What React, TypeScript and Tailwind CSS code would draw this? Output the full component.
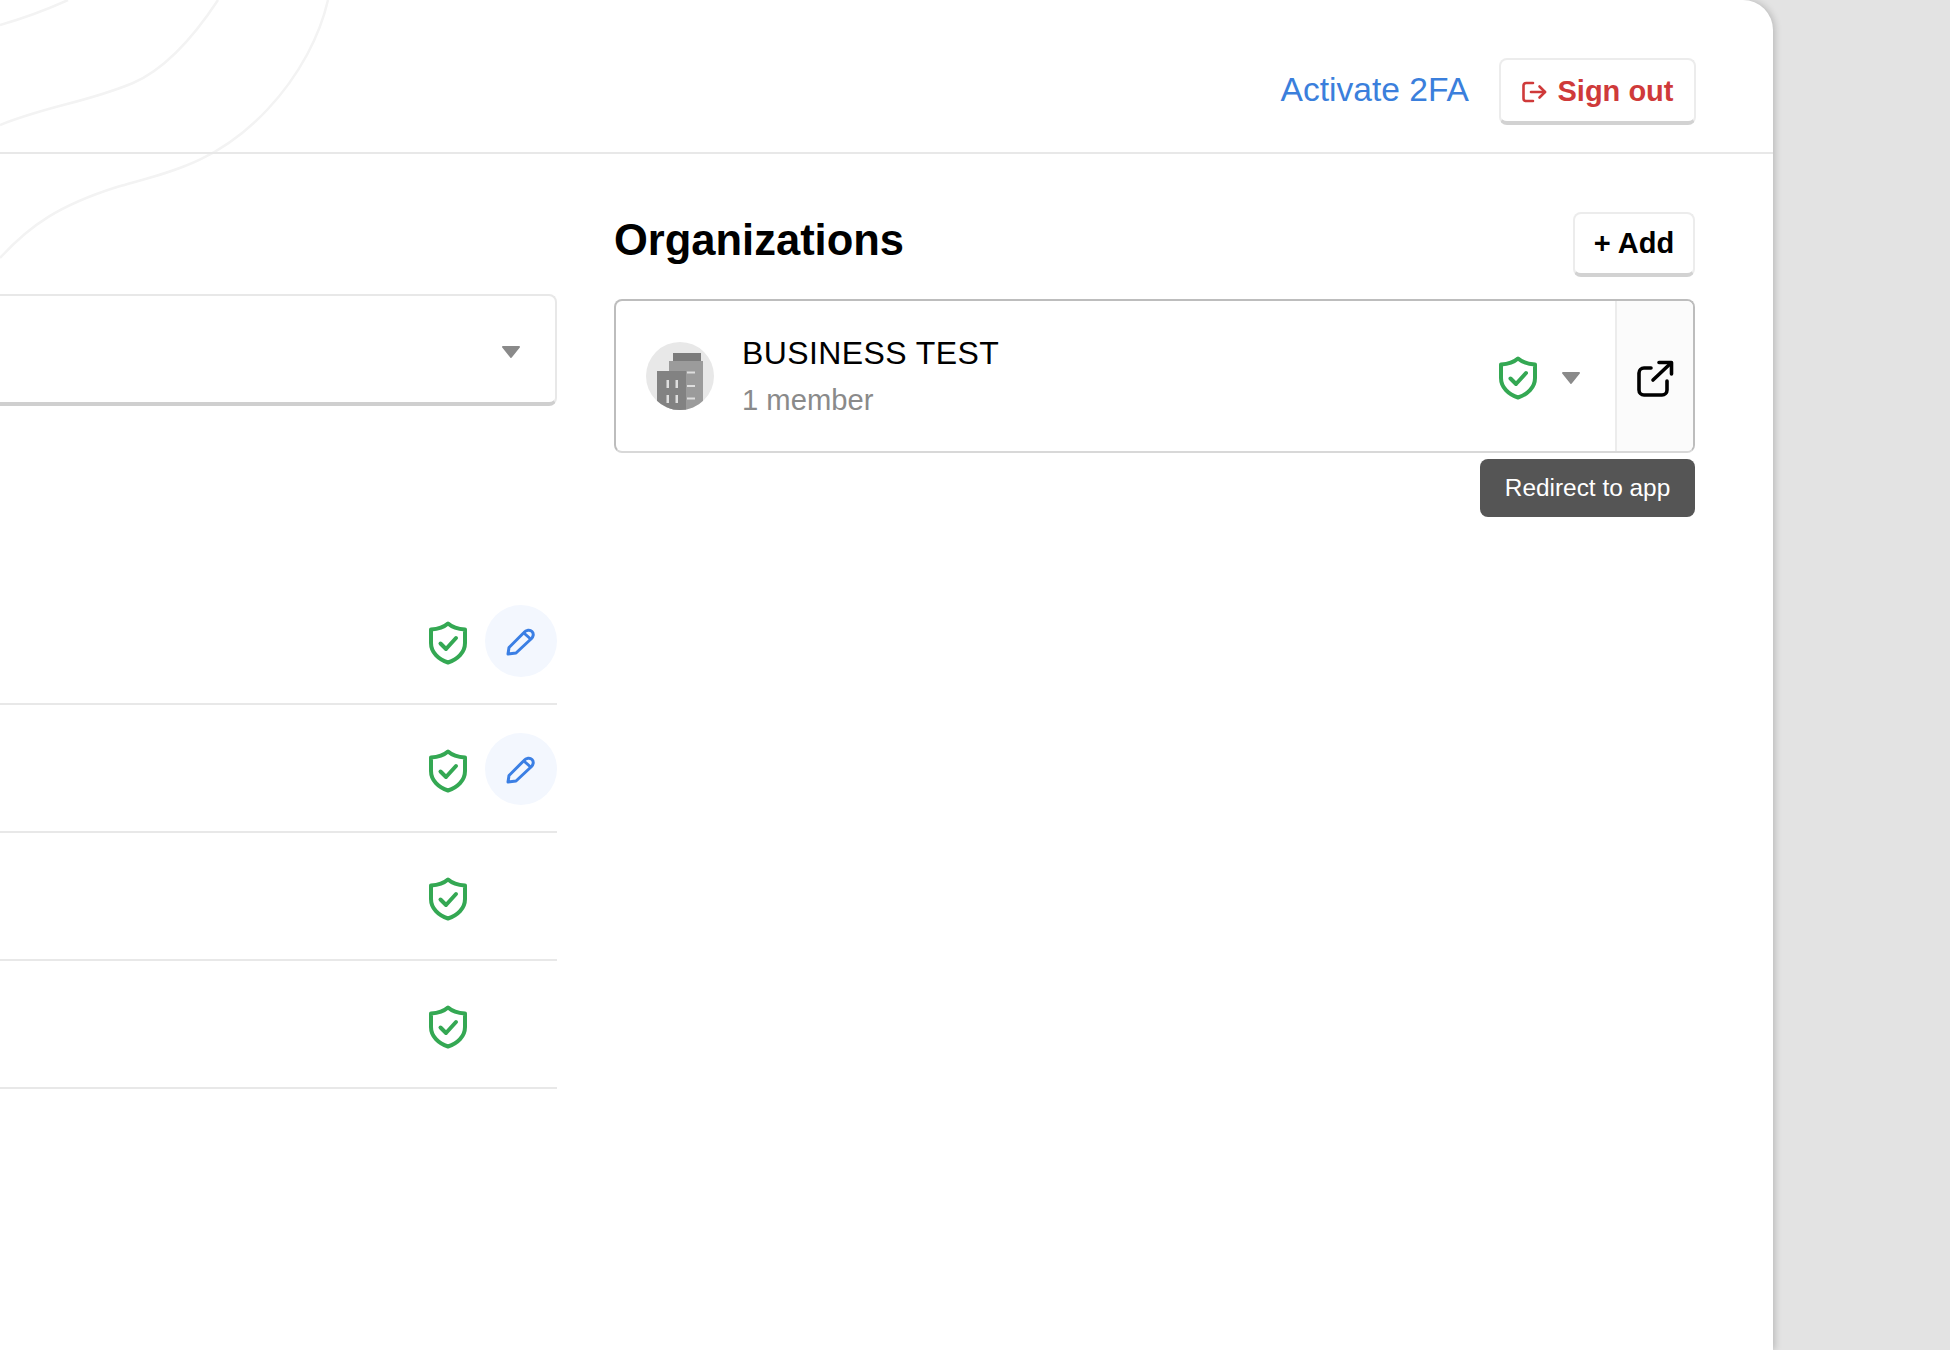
const ShieldIcon = () => (
  <svg width="38" height="44" viewBox="0 0 38 44" fill="none" stroke="#34a853" strokeWidth="4" strokeLinecap="round" strokeLinejoin="round">
    <path d="M19 2.500C23.500 6.500 29 8 36 8.500V22C36 31.500 28.500 38.500 19 41.500C9.500 38.500 2 31.500 2 22V8.500C9 8 14.500 6.500 19 2.500Z" />
    <path d="M11.500 22.500L17 28L27 17" />
  </svg>
);

const PencilIcon = () => (
  <svg width="29" height="29" viewBox="0 0 29 29" fill="none" stroke="#3b7fe4" strokeWidth="3" strokeLinecap="round" strokeLinejoin="round">
    <path d="M2 27L3 20.500L18 5.500C20 3 24 2.500 26 4.500C28 6.500 27.500 10 25 12L10 26Z" />
    <path d="M19 7L23.500 11" />
  </svg>
);

const Caret = () => (
  <svg width="20" height="14" viewBox="0 0 20 14" fill="#8a8a8a" stroke="#8a8a8a" strokeWidth="2" strokeLinejoin="round">
    <path d="M2 2H18L10 12Z" />
  </svg>
);

const SignOutIcon = () => (
  <svg width="25" height="22" viewBox="0 0 25 22" fill="none" stroke="#cf3a3a" strokeWidth="2.600" strokeLinecap="round" strokeLinejoin="round">
    <path d="M11 2H4A2.500 2.500 0 0 0 1.500 4.500V17.500A2.500 2.500 0 0 0 4 20H11" />
    <path d="M9 11H23" />
    <path d="M17.500 5.500L23 11L17.500 16.500" />
  </svg>
);

const ExternalIcon = () => (
  <svg width="37" height="37" viewBox="0 0 37 37" fill="none" stroke="#000" strokeWidth="3.600" strokeLinecap="round" strokeLinejoin="round">
    <path d="M14 8H7A5 5 0 0 0 2 13V30A5 5 0 0 0 7 35H25A5 5 0 0 0 30 30V21" />
    <path d="M16 20L34 3" />
    <path d="M22 2.500H34.500V14" />
  </svg>
);

const BuildingAvatar = () => (
  <svg width="68" height="68" viewBox="0 0 68 68">
    <defs>
      <clipPath id="avatar-clip">
        <circle cx="34" cy="34" r="34" />
      </clipPath>
    </defs>
    <circle cx="34" cy="34" r="34" fill="#e8e8e8" />
    <g clipPath="url(#avatar-clip)">
      <rect x="27" y="11" width="28" height="9" fill="#7b7b7b" />
      <rect x="23" y="19" width="34" height="49" fill="#9b9b9b" />
      <rect x="11" y="29" width="29" height="39" fill="#828282" />
      <g fill="#dedede">
        <rect x="20.500" y="38" width="2.500" height="8" />
        <rect x="29.500" y="38" width="2.500" height="8" />
        <rect x="20.500" y="53" width="2.500" height="8" />
        <rect x="29.500" y="53" width="2.500" height="8" />
        <rect x="41" y="29.500" width="8" height="2" />
        <rect x="41" y="43" width="8" height="2" />
        <rect x="41" y="55.500" width="8" height="2" />
      </g>
    </g>
  </svg>
);

const BackgroundCurves = () => (
  <svg className="absolute top-0 left-0" width="340" height="270" viewBox="0 0 340 270" fill="none" stroke="#f3f3f3" strokeWidth="2.500">
    <path d="M0 25C24 18 46 10 68 0" />
    <path d="M0 125C50 105 85 103 133 83C165 69 195 35 218 0" />
    <path d="M0 258C30 225 60 205 117 187C165 173 215 165 267 110C300 75 320 35 328 0" />
  </svg>
);

const UserRow = ({ editable }: { editable: boolean }) => (
  <div className="flex h-[128px] items-center justify-end gap-[18px] border-b-2 border-[#e8e8e8]">
    <div className="mt-[5px] flex">
      <ShieldIcon />
    </div>
    {editable ? (
      <button className="mt-[2px] flex h-[72px] w-[72px] items-center justify-center rounded-full bg-[#f3f7fe] pr-[2px]">
        <PencilIcon />
      </button>
    ) : (
      <div className="w-[72px]" />
    )}
  </div>
);

export default function App() {
  return (
    <div className="h-[1350px] w-[1950px] overflow-hidden bg-[#e3e3e3] font-['Liberation_Sans',Arial,sans-serif]">
      <main className="relative h-full w-[1773px] overflow-hidden rounded-tr-[30px] bg-white shadow-[2px_0_7px_rgba(0,0,0,0.18)]">
        <BackgroundCurves />
        <header className="relative flex h-[154px] justify-end border-b-2 border-[#e8e8e8] pt-[58px] pr-[77px]">
          <div className="flex h-[67px] items-center gap-[30px]">
            <a className="pb-[3px] text-[33.600px] leading-none text-[#3b7fdc]">Activate 2FA</a>
            <button className="flex h-[67px] w-[197px] items-center justify-center gap-[11px] rounded-lg border-2 border-b-[4px] border-[#ececec] border-b-[#d2d2d2] bg-white pt-[2px] text-[29px] font-bold text-[#cf3a3a]">
              <SignOutIcon />
              Sign out
            </button>
          </div>
        </header>

        <section className="relative flex gap-[57px] pr-[78px]">
          <div className="w-[557px] pt-[140px]">
            <div className="flex h-[112px] items-center justify-end rounded-r-lg border-2 border-b-[4px] border-l-0 border-[#e8e8e8] border-b-[#cfcfcf] bg-white pt-[5px] pr-[34px]">
              <Caret />
            </div>
            <div className="mt-[171px]">
              <UserRow editable />
              <UserRow editable />
              <UserRow editable={false} />
              <UserRow editable={false} />
            </div>
          </div>

          <div className="flex-1 pt-[58px]">
            <div className="flex h-[65px] items-center justify-between">
              <h2 className="mb-[8px] text-[43.500px] font-bold text-black">Organizations</h2>
              <button className="flex h-[65px] w-[122px] items-center justify-center rounded-lg border-2 border-b-[4px] border-[#ececec] border-b-[#d2d2d2] bg-white text-[29px] font-bold text-black">
                + Add
              </button>
            </div>

            <div className="relative mt-[22px]">
              <div className="flex h-[154px] overflow-hidden rounded-lg border-2 border-[#bdbdbd] border-b-[#d8d8d8]">
                <div className="flex flex-1 items-center pl-[30px]">
                  <BuildingAvatar />
                  <div className="mt-[4px] ml-[28px] flex-1">
                    <div className="text-[32px] leading-[43px] tracking-[0.4px] text-black">BUSINESS TEST</div>
                    <div className="mt-[2px] text-[29.200px] leading-[47px] text-[#8a8a8a]">1 member</div>
                  </div>
                  <div className="mr-[34px] flex items-center gap-[24px] pt-[4px]">
                    <ShieldIcon />
                    <Caret />
                  </div>
                </div>
                <div className="flex w-[78px] items-center justify-center border-l-2 border-[#ececec] bg-[#fbfbfb] pt-[4px]">
                  <ExternalIcon />
                </div>
              </div>
              <div className="absolute top-[calc(100%+6px)] right-0 flex h-[58px] w-[215px] items-center justify-center rounded-lg bg-[#555555] text-[24.400px] text-white">
                Redirect to app
              </div>
            </div>
          </div>
        </section>
      </main>
    </div>
  );
}
